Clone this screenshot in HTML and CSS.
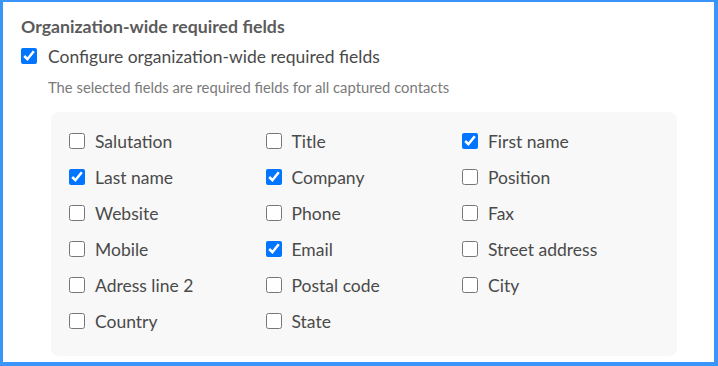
FILE: index.html
```html
<!DOCTYPE html>
<html lang="en">
<head>
  <meta charset="UTF-8" />
  <title>Required fields</title>
  <link rel="stylesheet" href="styles.css">
</head>
<body>
  <div class="frame">
    <h2 class="section-title">Organization-wide required fields</h2>
    <label class="main-option">
      <input type="checkbox" checked>
      <span>Configure organization-wide required fields</span>
    </label>
    <p class="hint">The selected fields are required fields for all captured contacts</p>

    <div class="fields">
      <label class="field"><input type="checkbox"><span>Salutation</span></label>
      <label class="field"><input type="checkbox"><span>Title</span></label>
      <label class="field"><input type="checkbox" checked><span>First name</span></label>
      <label class="field"><input type="checkbox" checked><span>Last name</span></label>
      <label class="field"><input type="checkbox" checked><span>Company</span></label>
      <label class="field"><input type="checkbox"><span>Position</span></label>
      <label class="field"><input type="checkbox"><span>Website</span></label>
      <label class="field"><input type="checkbox"><span>Phone</span></label>
      <label class="field"><input type="checkbox"><span>Fax</span></label>
      <label class="field"><input type="checkbox"><span>Mobile</span></label>
      <label class="field"><input type="checkbox" checked><span>Email</span></label>
      <label class="field"><input type="checkbox"><span>Street address</span></label>
      <label class="field"><input type="checkbox"><span>Adress line 2</span></label>
      <label class="field"><input type="checkbox"><span>Postal code</span></label>
      <label class="field"><input type="checkbox"><span>City</span></label>
      <label class="field"><input type="checkbox"><span>Country</span></label>
      <label class="field"><input type="checkbox"><span>State</span></label>
    </div>
  </div>
</body>
</html>
```
FILE: styles.css
```css
body {
  margin: 0;
  padding: 0;
  font-family: Lato, "Liberation Sans", sans-serif;
  background: #fff;
}
.frame {
  box-sizing: border-box;
  width: 718px;
  height: 366px;
  border-style: solid;
  border-color: #3a95fb;
  border-width: 2px 4px 4px 3px;
  padding: 14px 0 0 18px;
  overflow: hidden;
}
.section-title {
  margin: 0;
  font-size: 17.7px;
  font-weight: 700;
  line-height: 22px;
  color: #5b5b5b;
}
input[type="checkbox"] {
  width: 16px;
  height: 16px;
  margin: 0;
  flex: none;
}
.main-option {
  display: flex;
  align-items: center;
  gap: 11px;
  margin-top: 6px;
  height: 24px;
  font-size: 17.5px;
  color: #4a4a4a;
}
.hint {
  margin: 10px 0 0 27px;
  font-size: 14.8px;
  line-height: 18px;
  color: #7a7a7a;
}
.fields {
  display: grid;
  grid-template-columns: repeat(3, 196.5px);
  grid-auto-rows: 36px;
  width: 626px;
  box-sizing: border-box;
  margin: 16px 0 0 30px;
  padding: 11px 18px 17px;
  background: #f8f8f8;
  border-radius: 8px;
}
.field {
  display: flex;
  align-items: center;
  gap: 10px;
  font-size: 17.5px;
  color: #4a4a4a;
}
```
